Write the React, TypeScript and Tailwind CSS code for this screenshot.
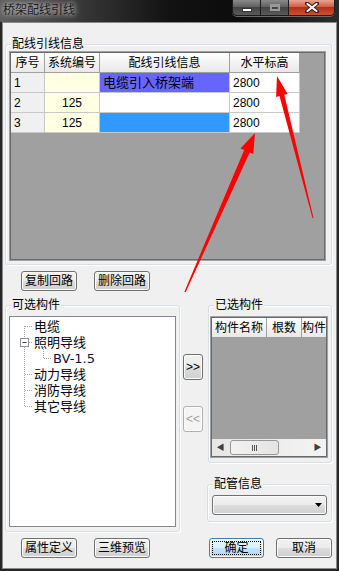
import React from "react";

const FONT = "font-['Liberation_Sans','Noto_Sans_CJK_SC',sans-serif]";

function Btn({
  children,
  className = "",
  kind = "normal",
}: {
  children: React.ReactNode;
  className?: string;
  kind?: "normal" | "primary" | "disabled";
}) {
  const look = {
    normal:
      "border-[#707070] bg-[linear-gradient(#f2f2f2_0%,#ebebeb_50%,#dddddd_50%,#cfcfcf_100%)] text-black",
    primary:
      "border-[#3c7fb1] bg-[linear-gradient(#eaf6fd_0%,#d9f0fc_50%,#bee6fd_50%,#a7d9f5_100%)] text-black",
    disabled: "border-[#adb2b5] bg-[#f4f4f4] text-[#a0a0a0]",
  }[kind];
  return (
    <div
      className={`flex shrink-0 rounded-[3px] border text-[12px] leading-none shadow-[inset_0_0_0_1px_#fcfcfc] ${look} ${className}`}
    >
      {kind === "primary" ? (
        <div className="m-[2px] flex flex-1 items-center justify-center border border-dotted border-black">
          {children}
        </div>
      ) : (
        <div className="flex flex-1 items-center justify-center">{children}</div>
      )}
    </div>
  );
}

function Group({
  label,
  className = "",
  children,
}: {
  label: string;
  className?: string;
  children?: React.ReactNode;
}) {
  return (
    <div
      className={`relative rounded-[3px] border border-[#d5dfe5] shadow-[inset_1px_1px_0_#ffffff,1px_1px_0_#ffffff] ${className}`}
    >
      <span className="absolute left-[5px] top-[-8px] bg-[#f0f0f0] px-[1px] text-[12px] leading-[14px]">
        {label}
      </span>
      {children}
    </div>
  );
}

function Head({ children, className = "" }: { children?: React.ReactNode; className?: string }) {
  return (
    <div
      className={`flex items-center justify-center border-b border-r border-[#a0a0a0] bg-[linear-gradient(#ffffff_0%,#f3f3f3_50%,#e9e9e9_100%)] text-[12px] ${className}`}
    >
      {children}
    </div>
  );
}

function Cell({ children, className = "" }: { children?: React.ReactNode; className?: string }) {
  return (
    <div className={`flex items-center border-b border-r border-[#c8c8c8] text-[12px] ${className}`}>
      {children}
    </div>
  );
}

const rows = [
  { no: "1", sys: "", info: "电缆引入桥架端", bg: "bg-[#6666ff]", h: "2800" },
  { no: "2", sys: "125", info: "", bg: "bg-white", h: "2800" },
  { no: "3", sys: "125", info: "", bg: "bg-[#3399ff]", h: "2800" },
];

const tree = [
  { text: "电缆", indent: "pl-[24px]" },
  { text: "照明导线", indent: "pl-[24px]" },
  { text: "BV-1.5", indent: "pl-[43px] text-[11px] text-[#101040] font-['DejaVu_Sans',sans-serif]" },
  { text: "动力导线", indent: "pl-[24px]" },
  { text: "消防导线", indent: "pl-[24px]" },
  { text: "其它导线", indent: "pl-[24px]" },
];

export default function App() {
  return (
    <div
      className={`relative flex h-[571px] w-[339px] flex-col overflow-hidden bg-[#262626] px-[2px] pb-[2px] text-black ${FONT}`}
    >
      {/* title bar */}
      <div className="-mx-[2px] flex h-[22px] shrink-0 items-start justify-between bg-[linear-gradient(90deg,#5e5e5e_0%,#3a3a3a_22%,#121212_50%,#0c0c0c_70%,#2c2c2c_100%)]">
        <span className="ml-[3px] mt-[3px] text-[12px] leading-[14px] text-[#1c1c1c] [text-shadow:0_0_4px_#d8d8d8,0_0_8px_#bfbfbf]">
          桥架配线引线
        </span>
        <div className="mr-[4px] flex h-[16px] overflow-hidden rounded-b-[5px] border border-t-0 border-[#1c1c1c] shadow-[0_1px_0_#6a6a6a]">
          <div className="flex w-[28px] items-center justify-center border-r border-[#1c1c1c] bg-[linear-gradient(#8a8a8a_0%,#5c5c5c_50%,#444444_50%,#5a5a5a_100%)]">
            <div className="mt-[4px] h-[4px] w-[10px] border border-[#333] bg-white" />
          </div>
          <div className="flex w-[28px] items-center justify-center border-r border-[#1c1c1c] bg-[linear-gradient(#8a8a8a_0%,#5c5c5c_50%,#444444_50%,#5a5a5a_100%)]">
            <div className="h-[7px] w-[10px] border-2 border-[#9a9a9a] border-t-[3px]" />
          </div>
          <div className="flex w-[45px] items-center justify-center bg-[linear-gradient(#e8a493_0%,#d0553d_50%,#b5301a_50%,#d0502e_100%)]">
            <svg width="14" height="11" viewBox="0 0 14 11">
              <path d="M2 1.5 L12 9.5 M12 1.5 L2 9.5" stroke="#3a1a12" strokeWidth="4" strokeLinecap="round" />
              <path d="M2.5 2 L11.5 9 M11.5 2 L2.5 9" stroke="#ffffff" strokeWidth="2.2" strokeLinecap="round" />
            </svg>
          </div>
        </div>
      </div>

      {/* client area */}
      <div className="flex flex-1 flex-col border border-[#8a8a8a] bg-[#f0f0f0]">
        <Group label="配线引线信息" className="ml-[2px] mt-[21px] h-[221px] w-[327px] shrink-0">
          <div className="ml-[3px] mt-[6px] h-[210px] w-[317px] border border-[#a0a0a0]">
            <div className="h-full w-full border border-[#696969] bg-[#a0a0a0]">
              <div className="grid w-[289px] grid-cols-[34px_55px_130px_70px] auto-rows-[20px]">
                <Head>序号</Head>
                <Head>系统编号</Head>
                <Head>配线引线信息</Head>
                <Head>水平标高</Head>
                {rows.map((r) => (
                  <React.Fragment key={r.no}>
                    <Cell className="border-[#a0a0a0] bg-[#f0f0f0] pl-[3px]">{r.no}</Cell>
                    <Cell className="justify-center bg-[#ffffe1]">{r.sys}</Cell>
                    <Cell className={`pl-[3px] text-[13px] ${r.bg}`}>{r.info}</Cell>
                    <Cell className="bg-white pl-[3px] text-[11px]">{r.h}</Cell>
                  </React.Fragment>
                ))}
              </div>
            </div>
          </div>
        </Group>

        <div className="mt-[6px] flex gap-[17px] pl-[18px]">
          <Btn className="h-[20px] w-[56px]">复制回路</Btn>
          <Btn className="h-[20px] w-[56px]">删除回路</Btn>
        </div>

        <div className="mt-[14px] flex">
          {/* left column */}
          <div className="ml-[2px] flex w-[175px] flex-col">
            <Group label="可选构件" className="h-[227px] w-[175px]">
              <div className="relative ml-[3px] mt-[10px] h-[211px] w-[167px] border border-[#828790] bg-white pt-[1px]">
                <svg className="absolute left-0 top-[1px]" width="60" height="100" viewBox="0 0 60 100">
                  <g stroke="#a0a0a0" strokeWidth="1" strokeDasharray="1 1" fill="none">
                    <path d="M14.5 8 V20 M14.5 29 V89" />
                    <path d="M15 8.5 H22 M19 24.5 H22 M15 56.5 H22 M15 72.5 H22 M15 88.5 H22" />
                    <path d="M33.5 29 V41 M34 40.5 H41" />
                  </g>
                  <rect x="10.5" y="20.5" width="8" height="8" fill="#ffffff" stroke="#919191" />
                  <path d="M12.5 24.5 H16.5" stroke="#1c3c78" strokeWidth="1" />
                </svg>
                {tree.map((t) => (
                  <div key={t.text} className={`flex h-[16px] items-center text-[13px] ${t.indent}`}>
                    <span className="leading-none">{t.text}</span>
                  </div>
                ))}
              </div>
            </Group>
            <div className="mt-[6px] flex gap-[17px] pl-[16px]">
              <Btn className="h-[20px] w-[56px]">属性定义</Btn>
              <Btn className="h-[20px] w-[56px]">三维预览</Btn>
            </div>
          </div>

          {/* middle arrows */}
          <div className="ml-[3px] flex w-[20px] flex-col gap-[26px] pt-[49px]">
            <Btn className="h-[26px] w-[20px] text-[11px] text-[#1a1a60]">&gt;&gt;</Btn>
            <Btn kind="disabled" className="h-[26px] w-[20px] text-[11px]">&lt;&lt;</Btn>
          </div>

          {/* right column */}
          <div className="ml-[4px] flex w-[125px] flex-col">
            <Group label="已选构件" className="ml-[1px] h-[158px] w-[124px]">
              <div className="ml-[1px] mt-[10px] h-[142px] w-[118px] border border-[#a0a0a0]">
                <div className="flex h-full w-full flex-col border border-[#696969] bg-[#a0a0a0]">
                  <div className="flex h-[20px] overflow-hidden">
                    <Head className="w-[55px] shrink-0">构件名称</Head>
                    <Head className="w-[35px] shrink-0">根数</Head>
                    <Head className="w-[30px] shrink-0 justify-start pl-0">构件</Head>
                  </div>
                  <div className="flex-1" />
                  <div className="flex h-[17px] items-center bg-[linear-gradient(90deg,#e6e6e6,#f3f3f3)]">
                    <div className="flex w-[17px] items-center justify-center text-[8px] text-[#404040]">◀</div>
                    <div className="ml-[1px] flex h-[15px] w-[49px] items-center justify-center rounded-[3px] border border-[#979797] bg-[linear-gradient(90deg,#f2f2f2,#e4e4e4)]">
                      <div className="flex gap-[1px]">
                        <div className="h-[6px] w-[1px] bg-[#555]" />
                        <div className="h-[6px] w-[1px] bg-[#555]" />
                        <div className="h-[6px] w-[1px] bg-[#555]" />
                      </div>
                    </div>
                    <div className="flex-1" />
                    <div className="flex w-[17px] items-center justify-center text-[8px] text-[#404040]">▶</div>
                  </div>
                </div>
              </div>
            </Group>
            <Group label="配管信息" className="mt-[21px] h-[38px] w-[125px]">
              <div className="ml-[4px] mt-[10px] flex h-[20px] w-[115px] items-center justify-end rounded-[3px] border border-[#707070] bg-[linear-gradient(#f2f2f2_0%,#ebebeb_50%,#dddddd_50%,#cfcfcf_100%)] pr-[4px] shadow-[inset_0_0_0_1px_#fcfcfc]">
                <svg width="7" height="4" viewBox="0 0 7 4">
                  <path d="M0 0 H7 L3.5 4 Z" fill="#000" />
                </svg>
              </div>
            </Group>
            <div className="mt-[16px] flex gap-[12px] pl-[2px]">
              <Btn kind="primary" className="h-[20px] w-[55px]">确定</Btn>
              <Btn className="h-[20px] w-[56px]">取消</Btn>
            </div>
          </div>
        </div>
      </div>

      {/* red annotation arrows */}
      <svg
        className="pointer-events-none absolute left-0 top-0"
        width="339"
        height="571"
        viewBox="0 0 339 571"
      >
        <polygon
          fill="#ff0000"
          points="277,76 287.7,93.9 284.3,94.8 313.5,217.9 312.5,218.1 279.5,96 276.1,96.9"
        />
        <polygon
          fill="#ff0000"
          points="255,133 253.3,154.1 249.7,152.5 185.6,292.3 184.4,291.7 244.2,150.1 240.5,148.5"
        />
      </svg>
    </div>
  );
}
